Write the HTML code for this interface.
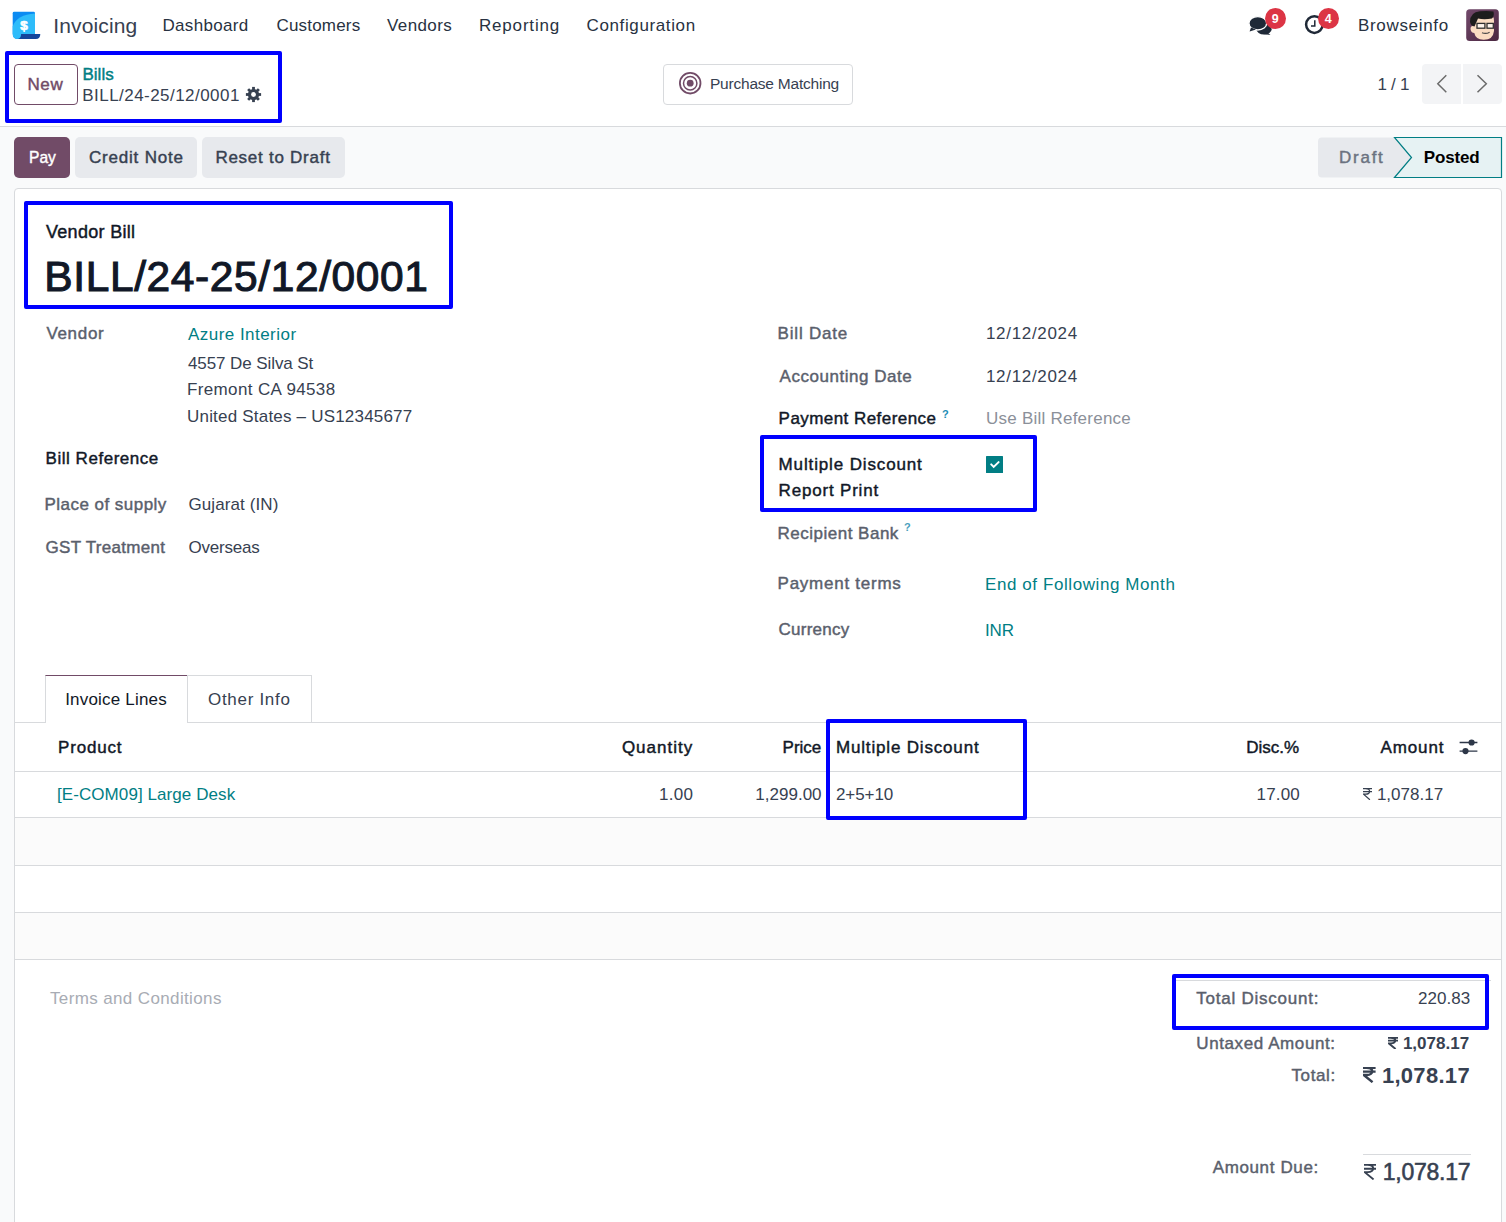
<!DOCTYPE html>
<html><head><meta charset="utf-8"><title>Vendor Bill</title>
<style>
html,body{margin:0;padding:0;width:1506px;height:1222px;overflow:hidden;background:#fff;}
body{position:relative;font-family:"Liberation Sans",sans-serif;}
.t{position:absolute;white-space:nowrap;}
.r{position:absolute;}
.badge{width:21px;height:21px;border-radius:50%;background:#dc3545;color:#fff;font-size:12.5px;line-height:23px;text-align:center;font-weight:700;font-family:"Liberation Sans",sans-serif;}
</style></head><body>
<div class="r" style="left:0px;top:0px;width:1506px;height:127px;background:#fff;"></div>
<div class="r" style="left:0px;top:126px;width:1506px;height:1px;background:#d8dadd;"></div>
<div class="r" style="left:0px;top:127px;width:1506px;height:1095px;background:#f9fafb;"></div>
<div class="r" style="left:14px;top:188px;width:1488px;height:1052px;background:#fff;border:1px solid #d8dadd;border-radius:4px;box-sizing:border-box;"></div>
<svg class="r" style="left:12px;top:11px" width="30" height="30" viewBox="0 0 30 30">
<path d="M0.7 2.2 Q0.7 0.75 2.2 0.75 L21.6 0.75 Q23 0.75 23 2.2 L23 28 L6 28 Q0.7 28 0.7 22.7 Z" fill="#0b8bf2"/>
<path d="M0.7 15.5 Q5 3.5 23 2.6 L23 28 L6 28 Q0.7 28 0.7 22.7 Z" fill="#2ebcfa"/>
<path d="M9.1 22.9 L28.3 22.9 Q28.3 28 23.8 28 L5.5 28 Q9.1 27.5 9.1 22.9 Z" fill="#15469c"/>
<text x="11.9" y="19.3" font-family="Liberation Sans" font-weight="700" font-size="13.5" fill="#fff" stroke="#fff" stroke-width="0.7" text-anchor="middle">$</text>
</svg>
<div class="t" style="left:53.20px;top:15px;font-size:21px;line-height:21px;color:#374151;letter-spacing:0.15px">Invoicing</div>
<div class="t" style="left:162.50px;top:17px;font-size:17px;line-height:17px;color:#283241;letter-spacing:0.312px">Dashboard</div>
<div class="t" style="left:276.50px;top:17px;font-size:17px;line-height:17px;color:#283241;letter-spacing:0.188px">Customers</div>
<div class="t" style="left:387.00px;top:17px;font-size:17px;line-height:17px;color:#283241;letter-spacing:0.4px">Vendors</div>
<div class="t" style="left:479.00px;top:17px;font-size:17px;line-height:17px;color:#283241;letter-spacing:0.812px">Reporting</div>
<div class="t" style="left:586.50px;top:17px;font-size:17px;line-height:17px;color:#283241;letter-spacing:0.625px">Configuration</div>
<svg class="r" style="left:1247px;top:14px" width="26" height="24" viewBox="0 0 26 24">
<ellipse cx="17" cy="15.2" rx="7.6" ry="5.4" fill="#1f2937"/>
<path d="M20.5 18.5 L23.5 21 L16 20 Z" fill="#1f2937"/>
<ellipse cx="10.8" cy="9.3" rx="8.9" ry="6.7" fill="#1f2937" stroke="#fff" stroke-width="1.4"/>
<path d="M4 13.5 L2.6 17.6 L9 15.6 Z" fill="#1f2937"/>
</svg>
<div class="r badge" style="left:1264.7px;top:7.8px;">9</div>
<svg class="r" style="left:1304px;top:14px" width="22" height="22" viewBox="0 0 22 22">
<circle cx="10.4" cy="10.6" r="8.3" fill="none" stroke="#1f2937" stroke-width="2.5"/>
<path d="M10.8 6.2 V12 H7" fill="none" stroke="#1f2937" stroke-width="1.5"/>
</svg>
<div class="r badge" style="left:1317.8px;top:7.8px;">4</div>
<div class="t" style="left:1358.00px;top:17px;font-size:17px;line-height:17px;color:#283241;letter-spacing:0.667px">Browseinfo</div>
<svg class="r" style="left:1466px;top:9px" width="33" height="32" viewBox="0 0 33 32">
<defs><linearGradient id="ag" x1="0" y1="0" x2="1" y2="1"><stop offset="0" stop-color="#72496b"/><stop offset="1" stop-color="#4a2640"/></linearGradient></defs>
<rect x="0.2" y="0.2" width="32.6" height="31.7" rx="3.5" fill="url(#ag)"/>
<path d="M7 10 Q7 4 17 4 Q28 4 28 12 L28 22 Q27 31 17.5 30.8 Q9.5 30.5 8.3 24 Q5 24 4.5 20 Q4.5 16.5 7.5 17 Z" fill="#fadcc2"/>
<path d="M4 13 Q4 3 14 2.2 Q22 1.5 27.5 2.5 Q28.5 7 26 9.5 Q18 11 12 9.5 L8.5 17.5 Q5 17 4 13 Z" fill="#1d1d1d"/>
<rect x="11" y="14.4" width="7.9" height="4.8" fill="#fdf3ea" stroke="#2f2f2f" stroke-width="1.3"/>
<rect x="21" y="14.4" width="6.3" height="4.8" fill="#fdf3ea" stroke="#2f2f2f" stroke-width="1.3"/>
<path d="M16 23.8 Q20 25.4 23.6 23.2" fill="none" stroke="#4a4a4a" stroke-width="1.2"/>
</svg>
<div class="r" style="left:14px;top:64px;width:64px;height:41px;border:1px solid #714b67;border-radius:4px;box-sizing:border-box;background:#fff;"></div>
<div class="t" style="left:27.40px;top:76px;font-size:17px;line-height:17px;color:#714b67;-webkit-text-stroke:0.43px #714b67;letter-spacing:0.65px">New</div>
<div class="t" style="left:82.50px;top:66px;font-size:17px;line-height:17px;color:#017e84;-webkit-text-stroke:0.43px #017e84;letter-spacing:0.0px">Bills</div>
<div class="t" style="left:82.30px;top:87px;font-size:17px;line-height:17px;color:#374151;letter-spacing:0.453px">BILL/24-25/12/0001</div>
<svg class="r" style="left:245px;top:86px" width="17" height="17" viewBox="0 0 17 17">
<g transform="translate(8.5,8.5)" fill="#374151">
<circle r="5.6"/>
<rect x="-1.4" y="-7.6" width="2.8" height="4" transform="rotate(0)"/><rect x="-1.4" y="-7.6" width="2.8" height="4" transform="rotate(45)"/><rect x="-1.4" y="-7.6" width="2.8" height="4" transform="rotate(90)"/><rect x="-1.4" y="-7.6" width="2.8" height="4" transform="rotate(135)"/><rect x="-1.4" y="-7.6" width="2.8" height="4" transform="rotate(180)"/><rect x="-1.4" y="-7.6" width="2.8" height="4" transform="rotate(225)"/><rect x="-1.4" y="-7.6" width="2.8" height="4" transform="rotate(270)"/><rect x="-1.4" y="-7.6" width="2.8" height="4" transform="rotate(315)"/>
<circle r="2.4" fill="#fff"/>
</g></svg>
<div class="r" style="left:5px;top:51px;width:277px;height:72px;border:4px solid #0000ff;border-radius:2px;box-sizing:border-box;"></div>
<div class="r" style="left:663px;top:64px;width:190px;height:41px;border:1px solid #d8dadd;border-radius:4px;box-sizing:border-box;background:#fff;"></div>
<svg class="r" style="left:678px;top:71px" width="25" height="25" viewBox="0 0 25 25">
<circle cx="12.2" cy="12.2" r="10.3" fill="none" stroke="#714b67" stroke-width="1.8"/>
<circle cx="12.2" cy="12.2" r="6.7" fill="none" stroke="#714b67" stroke-width="1.5"/>
<circle cx="12.2" cy="12.2" r="3.4" fill="#714b67"/>
</svg>
<div class="t" style="left:710.00px;top:76px;font-size:15.5px;line-height:15.5px;color:#374151;letter-spacing:-0.219px">Purchase Matching</div>
<div class="t" style="left:1377.40px;top:76px;font-size:17px;line-height:17px;color:#374151;letter-spacing:-0.225px">1 / 1</div>
<div class="r" style="left:1422px;top:64px;width:39px;height:40px;background:#f3f4f6;border-radius:4px 0 0 4px;"></div>
<div class="r" style="left:1463px;top:64px;width:39px;height:40px;background:#f3f4f6;border-radius:0 4px 4px 0;"></div>
<svg class="r" style="left:1422px;top:64px" width="80" height="40" viewBox="0 0 80 40">
<path d="M24.3 11.3 L15.8 19.8 L24.3 28.3" fill="none" stroke="#6b6b6b" stroke-width="1.5"/>
<path d="M55.5 11.3 L64.3 19.8 L55.5 28.3" fill="none" stroke="#6b6b6b" stroke-width="1.5"/>
</svg>
<div class="r" style="left:14px;top:137px;width:56px;height:41px;background:#714b67;border-radius:5px;"></div>
<div class="t" style="left:28.50px;top:149px;font-size:17px;line-height:17px;color:#fff;-webkit-text-stroke:0.43px #fff;transform:scaleX(0.9167);transform-origin:0 0">Pay</div>
<div class="r" style="left:75px;top:137px;width:122px;height:41px;background:#e7e9ed;border-radius:5px;"></div>
<div class="t" style="left:89.00px;top:149px;font-size:17px;line-height:17px;color:#374151;-webkit-text-stroke:0.43px #374151;letter-spacing:0.8px">Credit Note</div>
<div class="r" style="left:202px;top:137px;width:143px;height:41px;background:#e7e9ed;border-radius:5px;"></div>
<div class="t" style="left:215.40px;top:149px;font-size:17px;line-height:17px;color:#374151;-webkit-text-stroke:0.43px #374151;letter-spacing:0.738px">Reset to Draft</div>
<svg class="r" style="left:1318px;top:137px" width="185" height="42" viewBox="0 0 185 42">
<path d="M4 0.5 L77 0.5 L94 20.5 L77 40.5 L4 40.5 Q0 40.5 0 36.5 L0 4.5 Q0 0.5 4 0.5 Z" fill="#e7e9ed"/>
<path d="M76.5 0.5 L183.5 0.5 L183.5 40.5 L76.5 40.5 L93.5 20.5 Z" fill="#e6f2f3" stroke="#017e84" stroke-width="1.2"/>
</svg>
<div class="t" style="left:1339.00px;top:149px;font-size:17px;line-height:17px;color:#6b7280;-webkit-text-stroke:0.43px #6b7280;letter-spacing:1.75px">Draft</div>
<div class="t" style="left:1423.80px;top:149px;font-size:17px;line-height:17px;color:#000;font-weight:700;letter-spacing:-0.16px">Posted</div>
<div class="t" style="left:46.00px;top:223px;font-size:18px;line-height:18px;color:#111827;-webkit-text-stroke:0.45px #111827;letter-spacing:0.3px">Vendor Bill</div>
<div class="t" style="left:44.30px;top:256px;font-size:42.5px;line-height:42.5px;color:#111827;-webkit-text-stroke:1.06px #111827;letter-spacing:0.606px">BILL/24-25/12/0001</div>
<div class="r" style="left:24px;top:201px;width:429px;height:108px;border:4px solid #0000ff;border-radius:2px;box-sizing:border-box;"></div>
<div class="t" style="left:46.40px;top:325px;font-size:17px;line-height:17px;color:#5a606c;-webkit-text-stroke:0.43px #5a606c;letter-spacing:0.68px">Vendor</div>
<div class="t" style="left:188.00px;top:326px;font-size:17px;line-height:17px;color:#017e84;letter-spacing:0.462px">Azure Interior</div>
<div class="t" style="left:188.00px;top:355px;font-size:17px;line-height:17px;color:#374151;letter-spacing:-0.087px">4557 De Silva St</div>
<div class="t" style="left:187.00px;top:381px;font-size:17px;line-height:17px;color:#374151;letter-spacing:0.36px">Fremont CA 94538</div>
<div class="t" style="left:187.00px;top:408px;font-size:17px;line-height:17px;color:#374151;letter-spacing:0.2px">United States – US12345677</div>
<div class="t" style="left:45.50px;top:450px;font-size:17px;line-height:17px;color:#111827;-webkit-text-stroke:0.43px #111827;letter-spacing:0.538px">Bill Reference</div>
<div class="t" style="left:44.50px;top:496px;font-size:17px;line-height:17px;color:#5a606c;-webkit-text-stroke:0.43px #5a606c;letter-spacing:0.464px">Place of supply</div>
<div class="t" style="left:188.40px;top:496px;font-size:17px;line-height:17px;color:#374151;letter-spacing:0.109px">Gujarat (IN)</div>
<div class="t" style="left:45.50px;top:539px;font-size:17px;line-height:17px;color:#5a606c;-webkit-text-stroke:0.43px #5a606c;letter-spacing:0.292px">GST Treatment</div>
<div class="t" style="left:188.40px;top:539px;font-size:17px;line-height:17px;color:#374151;letter-spacing:-0.2px">Overseas</div>
<div class="t" style="left:777.60px;top:325px;font-size:17px;line-height:17px;color:#5a606c;-webkit-text-stroke:0.43px #5a606c;letter-spacing:0.8px">Bill Date</div>
<div class="t" style="left:986.00px;top:325px;font-size:17px;line-height:17px;color:#374151;letter-spacing:0.667px">12/12/2024</div>
<div class="t" style="left:779.60px;top:368px;font-size:17px;line-height:17px;color:#5a606c;-webkit-text-stroke:0.43px #5a606c;letter-spacing:0.529px">Accounting Date</div>
<div class="t" style="left:986.00px;top:368px;font-size:17px;line-height:17px;color:#374151;letter-spacing:0.667px">12/12/2024</div>
<div class="t" style="left:778.60px;top:410px;font-size:17px;line-height:17px;color:#111827;-webkit-text-stroke:0.43px #111827;letter-spacing:0.444px">Payment Reference</div>
<div class="t" style="left:942.00px;top:409px;font-size:11px;line-height:11px;color:#1c8db5;font-weight:700;letter-spacing:0px">?</div>
<div class="t" style="left:986.00px;top:410px;font-size:17px;line-height:17px;color:#8b9099;letter-spacing:0.235px">Use Bill Reference</div>
<div class="t" style="left:778.60px;top:456px;font-size:17px;line-height:17px;color:#111827;-webkit-text-stroke:0.43px #111827;letter-spacing:0.862px">Multiple Discount</div>
<div class="t" style="left:778.60px;top:482px;font-size:17px;line-height:17px;color:#111827;-webkit-text-stroke:0.43px #111827;letter-spacing:0.809px">Report Print</div>
<div class="r" style="left:986px;top:456px;width:17px;height:17px;background:#017e84;border-radius:0.5px;"></div>
<svg class="r" style="left:986px;top:456px" width="17" height="17" viewBox="0 0 17 17"><path d="M5.2 8.4 L7.7 10.9 L12.6 6.1" fill="none" stroke="#fff" stroke-width="2" stroke-linecap="round"/></svg>
<div class="r" style="left:760px;top:435px;width:277px;height:77px;border:4px solid #0000ff;border-radius:2px;box-sizing:border-box;"></div>
<div class="t" style="left:777.60px;top:525px;font-size:17px;line-height:17px;color:#5a606c;-webkit-text-stroke:0.43px #5a606c;letter-spacing:0.492px">Recipient Bank</div>
<div class="t" style="left:904.00px;top:522px;font-size:11px;line-height:11px;color:#4a9fbd;font-weight:700;letter-spacing:0px">?</div>
<div class="t" style="left:777.60px;top:575px;font-size:17px;line-height:17px;color:#5a606c;-webkit-text-stroke:0.43px #5a606c;letter-spacing:0.742px">Payment terms</div>
<div class="t" style="left:985.00px;top:576px;font-size:17px;line-height:17px;color:#017e84;letter-spacing:0.581px">End of Following Month</div>
<div class="t" style="left:778.60px;top:621px;font-size:17px;line-height:17px;color:#5a606c;-webkit-text-stroke:0.43px #5a606c;letter-spacing:0.229px">Currency</div>
<div class="t" style="left:985.00px;top:622px;font-size:17px;line-height:17px;color:#017e84;letter-spacing:-0.1px">INR</div>
<div class="r" style="left:14px;top:722px;width:1488px;height:1px;background:#d8dadd;"></div>
<div class="r" style="left:45px;top:675px;width:143px;height:48px;background:#fff;border:1px solid #d8dadd;border-bottom:none;border-top:1px solid #714b67;box-sizing:border-box;"></div>
<div class="r" style="left:187px;top:675px;width:125px;height:47px;background:#fff;border:1px solid #d8dadd;border-bottom:none;box-sizing:border-box;"></div>
<div class="t" style="left:65.20px;top:691px;font-size:17px;line-height:17px;color:#111827;letter-spacing:0.192px">Invoice Lines</div>
<div class="t" style="left:208.00px;top:691px;font-size:17px;line-height:17px;color:#374151;letter-spacing:0.7px">Other Info</div>
<div class="r" style="left:14px;top:771px;width:1488px;height:1px;background:#d8dadd;"></div>
<div class="r" style="left:14px;top:817px;width:1488px;height:1px;background:#d8dadd;"></div>
<div class="r" style="left:15px;top:818px;width:1486px;height:47px;background:#fbfbfb;"></div>
<div class="r" style="left:14px;top:865px;width:1488px;height:1px;background:#d8dadd;"></div>
<div class="r" style="left:15px;top:913px;width:1486px;height:46px;background:#fbfbfb;"></div>
<div class="r" style="left:14px;top:912px;width:1488px;height:1px;background:#d8dadd;"></div>
<div class="r" style="left:14px;top:959px;width:1488px;height:1px;background:#d8dadd;"></div>
<div class="t" style="left:58.00px;top:739px;font-size:17px;line-height:17px;color:#111827;-webkit-text-stroke:0.43px #111827;letter-spacing:0.833px">Product</div>
<div class="t" style="left:621.90px;top:739px;font-size:17px;line-height:17px;color:#111827;-webkit-text-stroke:0.43px #111827;letter-spacing:1.0px">Quantity</div>
<div class="t" style="left:782.60px;top:739px;font-size:17px;line-height:17px;color:#111827;-webkit-text-stroke:0.43px #111827;letter-spacing:-0.05px">Price</div>
<div class="t" style="left:836.00px;top:739px;font-size:17px;line-height:17px;color:#111827;-webkit-text-stroke:0.43px #111827;letter-spacing:0.825px">Multiple Discount</div>
<div class="t" style="left:1246.30px;top:739px;font-size:17px;line-height:17px;color:#111827;-webkit-text-stroke:0.43px #111827;letter-spacing:-0.02px">Disc.%</div>
<div class="t" style="left:1380.50px;top:739px;font-size:17px;line-height:17px;color:#111827;-webkit-text-stroke:0.43px #111827;letter-spacing:0.88px">Amount</div>
<svg class="r" style="left:1459px;top:738px" width="19" height="17" viewBox="0 0 19 17">
<path d="M0.6 4.5 L18.4 4.5 M0.6 13.1 L18.4 13.1" stroke="#2d3748" stroke-width="1.3"/>
<circle cx="12.6" cy="4.5" r="3.1" fill="#2d3748"/><circle cx="6.5" cy="13.1" r="3.1" fill="#2d3748"/>
</svg>
<div class="t" style="left:57.00px;top:786px;font-size:17px;line-height:17px;color:#017e84;letter-spacing:0.079px">[E-COM09] Large Desk</div>
<div class="t" style="left:659.00px;top:786px;font-size:17px;line-height:17px;color:#374151;letter-spacing:0.3px">1.00</div>
<div class="t" style="left:755.30px;top:786px;font-size:17px;line-height:17px;color:#374151;letter-spacing:0.014px">1,299.00</div>
<div class="t" style="left:836.00px;top:786px;font-size:17px;line-height:17px;color:#374151;letter-spacing:-0.08px">2+5+10</div>
<div class="t" style="left:1256.50px;top:786px;font-size:17px;line-height:17px;color:#374151;letter-spacing:0.175px">17.00</div>
<svg class="r" style="left:1363px;top:787.8px" width="9.10" height="12.20" viewBox="0 0 100 125" preserveAspectRatio="none"><path d="M0 7 H100 M0 37 H100 M28 7 C88 7 88 64 30 64 H6 L76 121" fill="none" stroke="#374151" stroke-width="13"/></svg>
<div class="t" style="left:1376.90px;top:786px;font-size:17px;line-height:17px;color:#374151;letter-spacing:0.014px">1,078.17</div>
<div class="r" style="left:826px;top:719px;width:201px;height:101px;border:4px solid #0000ff;border-radius:2px;box-sizing:border-box;"></div>
<div class="t" style="left:50.00px;top:990px;font-size:17px;line-height:17px;color:#a8acb4;letter-spacing:0.368px">Terms and Conditions</div>
<div class="r" style="left:1176px;top:980px;width:315px;height:1px;background:#d8dadd;"></div>
<div class="t" style="left:1196.30px;top:990px;font-size:17px;line-height:17px;color:#5a606c;-webkit-text-stroke:0.43px #5a606c;letter-spacing:0.764px">Total Discount:</div>
<div class="t" style="left:1418.00px;top:990px;font-size:17px;line-height:17px;color:#374151;letter-spacing:0.02px">220.83</div>
<div class="r" style="left:1172px;top:974px;width:317px;height:56px;border:4px solid #0000ff;border-radius:2px;box-sizing:border-box;"></div>
<div class="t" style="left:1196.30px;top:1035px;font-size:17px;line-height:17px;color:#5a606c;-webkit-text-stroke:0.43px #5a606c;letter-spacing:0.593px">Untaxed Amount:</div>
<svg class="r" style="left:1387.6px;top:1036.6px" width="10.00" height="12.40" viewBox="0 0 100 125" preserveAspectRatio="none"><path d="M0 7 H100 M0 37 H100 M28 7 C88 7 88 64 30 64 H6 L76 121" fill="none" stroke="#374151" stroke-width="19"/></svg>
<div class="t" style="left:1402.90px;top:1035px;font-size:17px;line-height:17px;color:#374151;font-weight:700;letter-spacing:0.014px">1,078.17</div>
<div class="t" style="left:1291.40px;top:1067px;font-size:17px;line-height:17px;color:#5a606c;-webkit-text-stroke:0.43px #5a606c;letter-spacing:0.64px">Total:</div>
<svg class="r" style="left:1363.4px;top:1067.4px" width="12.60" height="15.70" viewBox="0 0 100 125" preserveAspectRatio="none"><path d="M0 7 H100 M0 37 H100 M28 7 C88 7 88 64 30 64 H6 L76 121" fill="none" stroke="#374151" stroke-width="19"/></svg>
<div class="t" style="left:1381.90px;top:1065px;font-size:22px;line-height:22px;color:#374151;font-weight:700;letter-spacing:0.3px">1,078.17</div>
<div class="r" style="left:1363px;top:1154px;width:108px;height:1px;background:#d8dadd;"></div>
<div class="t" style="left:1212.70px;top:1159px;font-size:17px;line-height:17px;color:#5a606c;-webkit-text-stroke:0.43px #5a606c;letter-spacing:0.63px">Amount Due:</div>
<svg class="r" style="left:1363.8px;top:1164.2px" width="12.60" height="15.90" viewBox="0 0 100 125" preserveAspectRatio="none"><path d="M0 7 H100 M0 37 H100 M28 7 C88 7 88 64 30 64 H6 L76 121" fill="none" stroke="#374151" stroke-width="15"/></svg>
<div class="t" style="left:1382.70px;top:1161px;font-size:23px;line-height:23px;color:#374151;-webkit-text-stroke:0.58px #374151;letter-spacing:-0.229px">1,078.17</div>
</body></html>
